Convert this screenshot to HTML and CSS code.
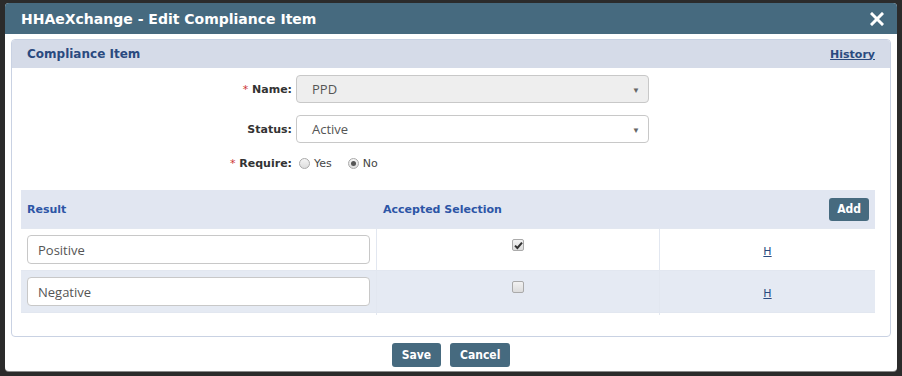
FILE: index.html
```html
<!DOCTYPE html>
<html lang="en">
<head>
  <meta charset="UTF-8">
  <title>HHAeXchange - Edit Compliance Item</title>
  <link rel="stylesheet" href="styles.css">
</head>
<body>

  <div class="dialog">
    <!-- Title bar -->
    <div class="titlebar">
      <span class="title">HHAeXchange - Edit Compliance Item</span>
      <span class="close">
        <svg width="14" height="14" viewBox="0 0 14 14"><path d="M2 2 L12 12 M12 2 L2 12" stroke="#fff" stroke-width="3" stroke-linecap="square"/></svg>
      </span>
    </div>

    <div class="dialog-body">
      <div class="panel">
        <div class="panel-head">
          <span>Compliance Item</span>
          <a class="history" href="#">History</a>
        </div>

        <!-- Form fields -->
        <div class="form">
          <div class="form-row">
            <label class="label"><span class="req">*</span> Name:</label>
            <div class="select disabled"><span>PPD</span><span class="caret">&#9660;</span></div>
          </div>
          <div class="form-row">
            <label class="label">Status:</label>
            <div class="select"><span>Active</span><span class="caret">&#9660;</span></div>
          </div>
          <div class="form-row radio-row">
            <label class="label"><span class="req">*</span> Require:</label>
            <span class="radio"></span><span class="radio-text">Yes</span>
            <span class="radio on"></span><span class="radio-text">No</span>
          </div>
        </div>

        <!-- Results table -->
        <div class="table-wrap">
          <div class="trow thead">
            <div class="cell c1">Result</div>
            <div class="cell c2">Accepted Selection</div>
            <div class="cell c3"><button class="btn btn-small">Add</button></div>
          </div>
          <div class="trow">
            <div class="cell c1"><div class="text-input">Positive</div></div>
            <div class="cell c2 center"><span class="check on">
              <svg width="9" height="9" viewBox="0 0 9 9"><path d="M1 4.6 L3.4 7 L8 1.6" stroke="#333" stroke-width="2" fill="none"/></svg>
            </span></div>
            <div class="cell c3 center"><a class="hlink" href="#">H</a></div>
          </div>
          <div class="trow alt">
            <div class="cell c1"><div class="text-input">Negative</div></div>
            <div class="cell c2 center"><span class="check"></span></div>
            <div class="cell c3 center"><a class="hlink" href="#">H</a></div>
          </div>
          <div class="trow ghost">
            <div class="cell c1"><div class="text-input"></div></div>
            <div class="cell c2"></div>
            <div class="cell c3"></div>
          </div>
        </div>
      </div>

      <div class="footer">
        <button class="btn">Save</button>
        <button class="btn">Cancel</button>
      </div>
    </div>
  </div>

</body>
</html>
```

FILE: styles.css
```css
body {
  background-color: #2b2b2b;
  margin: 0;
  padding: 3px 5px;
  font-family: "DejaVu Sans", Verdana, sans-serif;
  font-size: 12px;
  color: #333;
}
.dialog {
  background-color: #fff;
  width: 892px;
  height: 368px;
  border-radius: 4px;
  overflow: hidden;
  box-shadow: 0 1px 0 #8a8a8a;
}
.titlebar {
  background-color: #466a7f;
  height: 31px;
  display: flex;
  align-items: center;
  justify-content: space-between;
  padding: 0 13px 0 16px;
  color: #fff;
}
.title {
  font-weight: bold;
  font-size: 14px;
}
.close {
  display: flex;
  margin-top: 1px;
}
.dialog-body {
  padding: 5px 6px 0 6px;
}
.panel {
  border: 1px solid #c9d2e3;
  border-radius: 4px;
  height: 296px;
  overflow: hidden;
}
.panel-head {
  background-color: #d5dbe8;
  height: 28px;
  display: flex;
  align-items: center;
  justify-content: space-between;
  padding: 0 15px;
  font-weight: bold;
  font-size: 12px;
  color: #2a4a7f;
}
.history {
  color: #2a4a7f;
  font-size: 11px;
}
.form {
  padding-top: 7px;
}
.form-row {
  display: flex;
  align-items: center;
  margin-bottom: 12px;
}
.label {
  width: 280px;
  text-align: right;
  font-weight: bold;
  font-size: 11px;
  margin-right: 4px;
  color: #333;
}
.req {
  color: #c33;
  font-weight: normal;
}
.select {
  width: 353px;
  height: 28px;
  box-sizing: border-box;
  border: 1px solid #c8c8c8;
  border-radius: 4px;
  background-color: #fff;
  display: flex;
  align-items: center;
  justify-content: space-between;
  padding: 0 8px 0 15px;
  font-family: "Open Sans", sans-serif;
  font-size: 13px;
  color: #555;
}
.select.disabled {
  background-color: #eee;
}
.caret {
  font-size: 8px;
  color: #666;
}
.radio-row {
  margin-top: 1px;
  height: 16px;
}
.radio {
  width: 11px;
  height: 11px;
  box-sizing: border-box;
  border: 1px solid #aaa;
  border-radius: 50%;
  background: linear-gradient(#f4f4f4, #ddd);
  margin: 0 4px 0 3px;
  position: relative;
}
.radio.on::after {
  content: "";
  position: absolute;
  left: 2px;
  top: 2px;
  width: 5px;
  height: 5px;
  border-radius: 50%;
  background-color: #555;
}
.radio-text {
  font-size: 11px;
  color: #444;
  margin-right: 13px;
}
.table-wrap {
  margin: 19px 0 0 9px;
  width: 854px;
  height: 125px;
  overflow: hidden;
}
.trow {
  display: flex;
  height: 41px;
  border-bottom: 1px solid #e2e7f0;
}
.thead {
  background-color: #e1e6f1;
  height: 38px;
  font-weight: bold;
  font-size: 11px;
  color: #2c55a6;
}
.alt {
  background-color: #e5eaf3;
}
.cell {
  display: flex;
  align-items: center;
  box-sizing: border-box;
  padding: 0 6px;
  border-right: 1px solid #e2e7f0;
}
.thead .cell {
  border-right: none;
}
.c1 {
  width: 356px;
}
.c2 {
  width: 283px;
}
.c3 {
  width: 215px;
  justify-content: flex-end;
  border-right: none;
}
.center {
  justify-content: center;
}
.trow .c2.center {
  align-items: flex-start;
  padding-top: 10px;
}
.text-input {
  width: 345px;
  height: 29px;
  box-sizing: border-box;
  border: 1px solid #c8c8c8;
  border-radius: 4px;
  background-color: #fff;
  padding: 0 10px;
  display: flex;
  align-items: center;
  font-family: "Open Sans", sans-serif;
  font-size: 13px;
  color: #555;
}
.ghost .text-input {
  border-color: #f2f2f2;
}
.check {
  width: 12px;
  height: 12px;
  box-sizing: border-box;
  border: 1px solid #aaa;
  border-radius: 2px;
  background: linear-gradient(#f2f2f2, #dcdcdc);
  display: flex;
  align-items: center;
  justify-content: center;
}
.hlink {
  color: #2a4a7f;
  font-size: 11px;
  padding-top: 3px;
}
.btn {
  background-color: #466a7f;
  color: #fff;
  border: none;
  border-radius: 3px;
  font-family: "DejaVu Sans Condensed", "DejaVu Sans", sans-serif;
  font-weight: bold;
  font-size: 12px;
  height: 24px;
  padding: 0 10px;
  cursor: pointer;
}
.btn-small {
  height: 23px;
  padding: 0 8px;
}
.footer {
  display: flex;
  justify-content: center;
  gap: 9px;
  padding-top: 6px;
}
```
